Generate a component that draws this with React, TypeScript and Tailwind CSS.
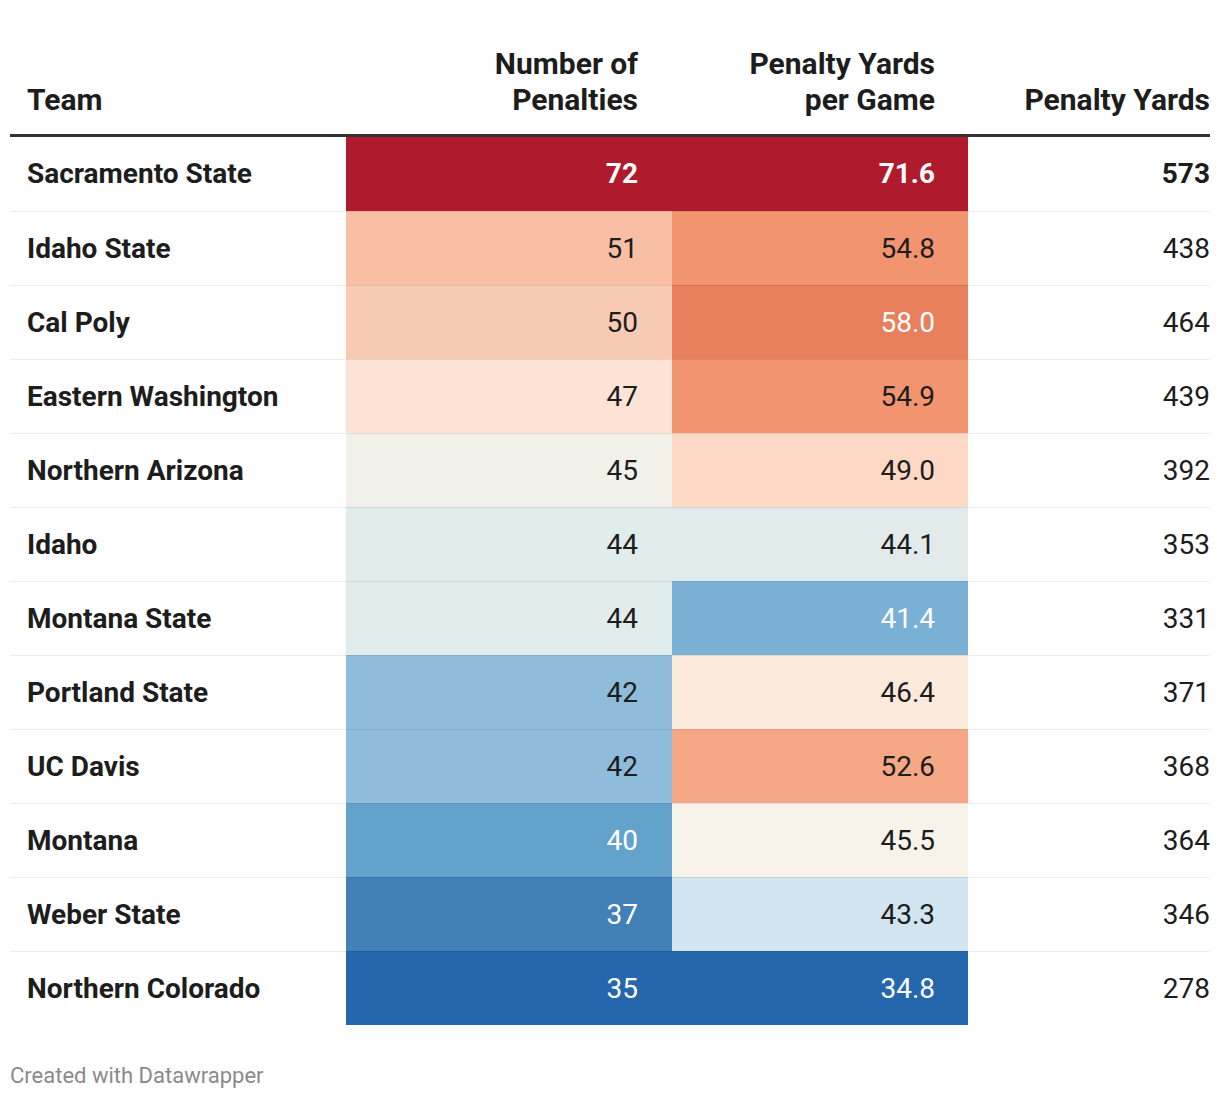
import React from 'react';

type Row = {
  team: string;
  pen: string;
  penBg: string;
  penLight?: boolean;
  ypg: string;
  ypgBg: string;
  ypgLight?: boolean;
  yards: string;
};

const rows: Row[] = [
  { team: 'Sacramento State', pen: '72', penBg: 'bg-[#b01a2d]', penLight: true, ypg: '71.6', ypgBg: 'bg-[#b01a2d]', ypgLight: true, yards: '573' },
  { team: 'Idaho State', pen: '51', penBg: 'bg-[#f9bfa4]', ypg: '54.8', ypgBg: 'bg-[#f2946f]', yards: '438' },
  { team: 'Cal Poly', pen: '50', penBg: 'bg-[#f9cbb5]', ypg: '58.0', ypgBg: 'bg-[#e8805d]', ypgLight: true, yards: '464' },
  { team: 'Eastern Washington', pen: '47', penBg: 'bg-[#fde3d6]', ypg: '54.9', ypgBg: 'bg-[#f2946f]', yards: '439' },
  { team: 'Northern Arizona', pen: '45', penBg: 'bg-[#f1f1ea]', ypg: '49.0', ypgBg: 'bg-[#fdd9c5]', yards: '392' },
  { team: 'Idaho', pen: '44', penBg: 'bg-[#e1ecec]', ypg: '44.1', ypgBg: 'bg-[#e2ebec]', yards: '353' },
  { team: 'Montana State', pen: '44', penBg: 'bg-[#e1ecec]', ypg: '41.4', ypgBg: 'bg-[#79b0d4]', ypgLight: true, yards: '331' },
  { team: 'Portland State', pen: '42', penBg: 'bg-[#8ebcda]', ypg: '46.4', ypgBg: 'bg-[#fbeadb]', yards: '371' },
  { team: 'UC Davis', pen: '42', penBg: 'bg-[#8ebcda]', ypg: '52.6', ypgBg: 'bg-[#f6a886]', yards: '368' },
  { team: 'Montana', pen: '40', penBg: 'bg-[#62a2cb]', penLight: true, ypg: '45.5', ypgBg: 'bg-[#f7f3e8]', yards: '364' },
  { team: 'Weber State', pen: '37', penBg: 'bg-[#4280b8]', penLight: true, ypg: '43.3', ypgBg: 'bg-[#d2e4f0]', yards: '346' },
  { team: 'Northern Colorado', pen: '35', penBg: 'bg-[#2567ad]', penLight: true, ypg: '34.8', ypgBg: 'bg-[#2567ad]', ypgLight: true, yards: '278' },
];

export default function App() {
  return (
    <div className="bg-white px-[10px] pt-[46px] font-['Roboto',sans-serif] text-[#1d1d1d]">
      <table className="w-[1200px] table-fixed border-separate border-spacing-0 text-[28px]">
        <colgroup>
          <col className="w-[336px]" />
          <col className="w-[326px]" />
          <col className="w-[296px]" />
          <col className="w-[242px]" />
        </colgroup>
        <thead>
          <tr className="align-bottom text-[30px] font-bold leading-[36px]">
            <th className="border-b-[3px] border-[#333333] pb-[16px] pl-[17px] text-left font-bold">Team</th>
            <th className="border-b-[3px] border-[#333333] pb-[16px] pr-[34px] text-right font-bold">
              Number of
              <br />
              Penalties
            </th>
            <th className="border-b-[3px] border-[#333333] pb-[16px] pr-[33px] text-right font-bold">
              Penalty Yards
              <br />
              per Game
            </th>
            <th className="border-b-[3px] border-[#333333] pb-[16px] text-right font-bold">Penalty Yards</th>
          </tr>
        </thead>
        <tbody>
          {rows.map((r, i) => {
            const first = i === 0;
            const line = first ? '' : 'border-t border-[rgba(0,0,0,0.075)]';
            return (
              <tr key={r.team} className={first ? 'h-[74px] font-bold' : 'h-[74px]'}>
                <td className={`${line} pl-[17px] font-bold`}>{r.team}</td>
                <td className={`${line} ${r.penBg} pr-[34px] text-right tabular-nums ${r.penLight ? 'text-white' : ''}`}>{r.pen}</td>
                <td className={`${line} ${r.ypgBg} pr-[33px] text-right tabular-nums ${r.ypgLight ? 'text-white' : ''}`}>{r.ypg}</td>
                <td className={`${line} text-right tabular-nums`}>{r.yards}</td>
              </tr>
            );
          })}
        </tbody>
      </table>
      <p className="mt-[37px] text-[22px] leading-[28px] text-[#8a8a8a]">Created with Datawrapper</p>
    </div>
  );
}
